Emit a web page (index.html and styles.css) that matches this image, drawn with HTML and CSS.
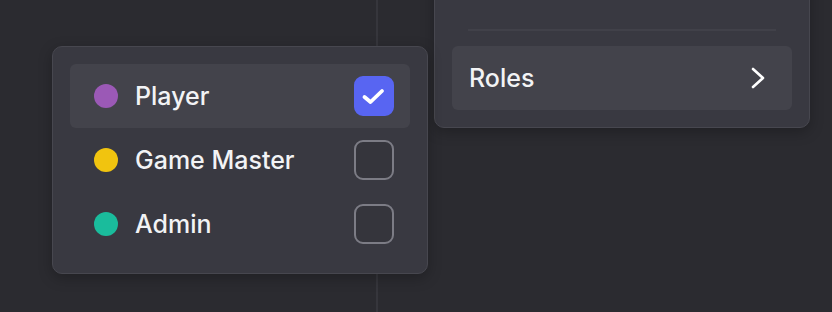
FILE: index.html
```html
<!DOCTYPE html>
<html lang="en">
<head>
    <meta charset="UTF-8">
    <meta name="viewport" content="width=device-width, initial-scale=1.0">
    <title>Role Picker</title>
    <link rel="stylesheet" href="styles.css">
</head>
<body>
    <div class="stage">
        <div class="pane pane-left"></div>
        <div class="pane pane-right"></div>

        <!-- Parent context menu -->
        <div class="menu menu-parent">
            <div class="menu-divider"></div>
            <div class="menu-item">
                <span class="menu-label">Roles</span>
                <svg class="chevron" width="14" height="24" viewBox="0 0 14 24">
                    <path d="M2 3 L12 12 L2 21" fill="none" stroke="#fff" stroke-width="2.6" stroke-linecap="round" stroke-linejoin="round"/>
                </svg>
            </div>
        </div>

        <!-- Roles submenu -->
        <div class="menu menu-roles">
            <div class="role-row active">
                <span class="role-dot" style="background:#9b59b6"></span>
                <span class="menu-label">Player</span>
                <span class="checkbox checked">
                    <svg width="26" height="26" viewBox="0 0 26 26">
                        <path d="M3.5 14 L9.5 19 L21 8" fill="none" stroke="#fff" stroke-width="3.8" stroke-linecap="round" stroke-linejoin="round"/>
                    </svg>
                </span>
            </div>
            <div class="role-row">
                <span class="role-dot" style="background:#f1c40f"></span>
                <span class="menu-label">Game Master</span>
                <span class="checkbox"></span>
            </div>
            <div class="role-row">
                <span class="role-dot" style="background:#1abc9c"></span>
                <span class="menu-label">Admin</span>
                <span class="checkbox"></span>
            </div>
        </div>
    </div>
</body>
</html>
```

FILE: styles.css
```css
/* dark context menu look */
body {
    margin: 0;
    background-color: #2b2b30;
    font-family: Inter, "Noto Sans", sans-serif;
    color: #f2f3f5;
    overflow: hidden;
}

.stage {
    position: relative;
    display: flex;
    width: 832px;
    height: 312px;
}

.pane-left {
    width: 376px;
    border-right: 2px solid #36363c;
}

.pane-right {
    flex: 1;
}

/* Menus are popovers, so they sit over the panes */
.menu {
    position: absolute;
    box-sizing: border-box;
    width: 376px;
    padding: 17px;
    background-color: #393941;
    border: 1px solid #47474f;
    border-radius: 10px;
    box-shadow: 0 4px 14px rgba(0, 0, 0, 0.25);
}

.menu-parent {
    left: 434px;
    top: -40px;
    padding-top: 68px;
}

.menu-divider {
    height: 2px;
    margin: 0 16px 15px;
    background-color: #414149;
}

.menu-item {
    display: flex;
    align-items: center;
    justify-content: space-between;
    height: 64px;
    padding: 0 27px 0 17px;
    background-color: #43434b;
    border-radius: 6px;
}

.menu-roles {
    left: 52px;
    top: 46px;
}

.menu-label {
    font-size: 25px;
    font-weight: 550;
    letter-spacing: 0;
}

.role-row {
    display: flex;
    align-items: center;
    height: 64px;
    padding: 0 16px 0 24px;
    border-radius: 6px;
}

.role-row.active {
    background-color: #43434b;
}

.role-dot {
    width: 24px;
    height: 24px;
    border-radius: 50%;
    margin-right: 17px;
    flex-shrink: 0;
}

.checkbox {
    margin-left: auto;
    box-sizing: border-box;
    width: 40px;
    height: 40px;
    border: 2px solid #7c7c85;
    border-radius: 9px;
    background-color: #35353c;
    display: flex;
    align-items: center;
    justify-content: center;
}

.checkbox.checked {
    background-color: #5865f2;
    border-color: #5865f2;
}
```
